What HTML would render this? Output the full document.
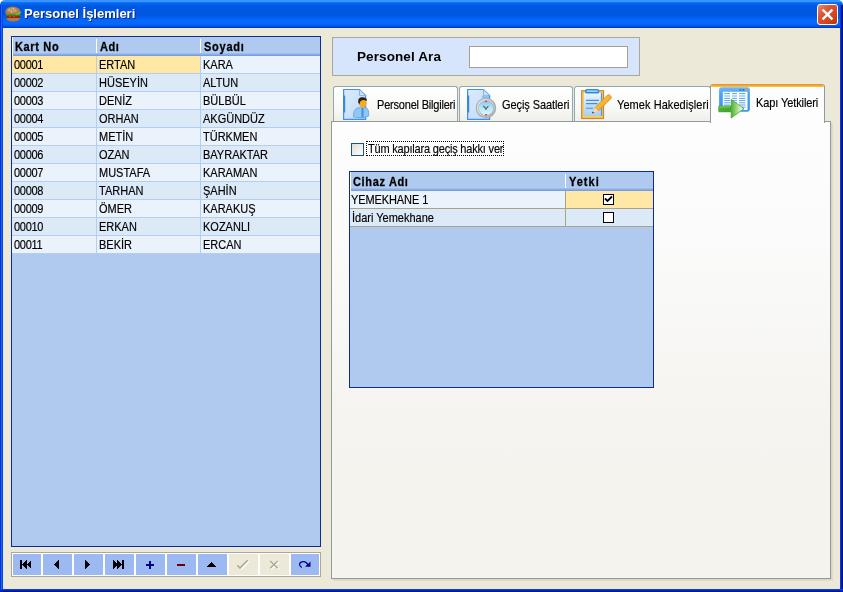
<!DOCTYPE html>
<html lang="tr">
<head>
<meta charset="utf-8">
<title>Personel İşlemleri</title>
<style>
html,body{margin:0;padding:0;}
body{width:843px;height:592px;overflow:hidden;background:#ECE9D8;font-family:"Liberation Sans",sans-serif;font-size:11px;color:#000;position:relative;}
div,span,svg{position:absolute;box-sizing:border-box;}
#win{left:0;top:0;width:843px;height:592px;background:#ECE9D8;overflow:hidden;}
#title{left:0;top:0;width:843px;height:28px;
 background:linear-gradient(to bottom,#3A93FF 0px,#3A93FF 1.5px,#0A74F8 2.5px,#0262EE 4px,#0058E2 6px,#0056E0 15px,#0260F0 18px,#0468FD 20px,#0468FD 24px,#0256E8 26px,#003CCC 27.5px,#003CCC 28px);
 border-radius:5px 5px 0 0;}
#corn{left:0;top:0;width:843px;height:10px;background:#fff;}
#ttxt{left:24px;top:6px;letter-spacing:0;color:#fff;font-size:13px;line-height:15px;font-weight:bold;white-space:nowrap;text-shadow:1px 1px 0 #0A2A7A;}
#bl{left:0;top:5px;width:3px;height:587px;background:linear-gradient(to right,#0030DC 0px,#0030DC 1px,#166AEE 1px,#166AEE 2px,#0046E0 2px,#0046E0 3px);}
#br{left:840px;top:5px;width:3px;height:587px;background:linear-gradient(to right,#0A38DC 0px,#0A38DC 1px,#001EA8 1px,#001EA8 2px,#00148C 2px,#00148C 3px);}
#bb{left:0;top:589px;width:843px;height:3px;background:linear-gradient(to bottom,#0540F0 0px,#0540F0 1px,#0025C0 1px,#0025C0 2px,#001488 2px,#001488 3px);}
#close{left:817px;top:4px;width:21px;height:21px;border:1px solid #fff;border-radius:3px;
 background:linear-gradient(135deg,#EC8B6C 0%,#DE5532 35%,#D4441E 70%,#B8300F 100%);}
.grid{border:1px solid #0A2C96;background:#B0CAEF;overflow:hidden;}
.ghead{left:0;top:0;height:19px;background:linear-gradient(to bottom,#B0CAEF 0px,#B0CAEF 14.5px,#B3CDF2 15.5px,#9DBCEA 16.5px,#8AAEE5 17.5px,#789DDC 18.5px,#789DDC 19px);}
.hc{top:1px;height:19px;letter-spacing:0.4px;font-weight:bold;font-size:11px;line-height:19px;white-space:nowrap;}
.hsep{top:2px;width:1px;height:14px;background:#fff;}
.row{left:0;height:18px;}
.row.o{background:#EAF2FC;}
.row.e{background:#DCEAF8;}
.c{top:1px;height:17px;line-height:17px;white-space:nowrap;font-size:11px;}
.t{position:relative;display:inline-block;transform:scaleY(1.13);transform-origin:0 80%;}
.c,.hc,.tl,#ttxt,#spt{will-change:transform;}
.c,.tl{-webkit-text-stroke:0.15px #000;}
.hc{-webkit-text-stroke:0.25px #000;}
.vl{top:0;width:1px;}
.hl{left:0;height:1px;}
.sel{background:#FFE8A6;top:0;height:17px;}
.tab{top:86px;height:35px;border:1px solid #91A7B4;border-bottom:none;border-radius:3px 3px 0 0;
 background:linear-gradient(to bottom,#FFFFFF 0%,#FAFAF8 50%,#F0F0EA 100%);}
.tl{white-space:nowrap;font-size:11px;line-height:13px;}
.nb{top:2px;width:29px;height:21px;background:#9DB9F1;}
.nb.d{background:#ECE9D8;}
</style>
</head>
<body>
<div id="win">
<div id="corn"></div><div id="title"><div id="ttxt">Personel İşlemleri</div></div>
<div id="bl"></div><div id="br"></div><div id="bb"></div>
<svg id="burger" style="left:4.5px;top:5.5px" width="17" height="16" viewBox="0 0 17 16">
<ellipse cx="7.8" cy="6" rx="7.5" ry="5.6" fill="#B27C46"/>
<ellipse cx="7" cy="4.3" rx="4.5" ry="2.3" fill="#C49A68"/><rect x="4" y="3" width="1" height="1" fill="#E8D0A8"/><rect x="8" y="2" width="1" height="1" fill="#E8D0A8"/><rect x="10.5" y="4.5" width="1" height="1" fill="#E8D0A8"/><rect x="6" y="5.5" width="1" height="1" fill="#E8D0A8"/>
<rect x="1" y="8" width="14.5" height="2" fill="#3E9A2A"/>
<path d="M10 8 L16 5.5 L16 7 L12 9 Z" fill="#6FC23A"/>
<rect x="1.5" y="9.6" width="13.5" height="2.4" fill="#8E2A12"/>
<rect x="4" y="10" width="2" height="1.2" fill="#E03A1A"/><rect x="8" y="10" width="2" height="1.2" fill="#E03A1A"/>
<path d="M1.5 12 H15 Q14.5 15.5 8 15.5 Q2 15.5 1.5 12 Z" fill="#B07A42"/>
</svg>
<div id="close"><svg style="left:0;top:0" width="19" height="19" viewBox="0 0 19 19"><path d="M4.6 4.6 L14.4 14.4 M14.4 4.6 L4.6 14.4" stroke="#fff" stroke-width="2.3" fill="none"/></svg></div>
<div class="grid" id="g1" style="left:11px;top:36px;width:310px;height:511px;">
<div class="ghead" style="width:308px;"></div>
<div class="hsep" style="left:0;top:0;height:19px"></div>
<div class="hc" style="left:3px;letter-spacing:0.65px"><span class="t">Kart No</span></div>
<div class="hc" style="left:88px;letter-spacing:0.6px"><span class="t">Adı</span></div>
<div class="hc" style="left:192px;letter-spacing:0.75px"><span class="t">Soyadı</span></div>
<div class="hsep" style="left:84px"></div><div class="hsep" style="left:188px"></div>
<div class="row o" style="top:19px;width:308px;">
<div class="sel" style="left:0;width:188px;"></div>
<div class="c" style="left:2px;letter-spacing:-0.3px"><span class="t">00001</span></div><div class="c" style="left:87px"><span class="t">ERTAN</span></div><div class="c" style="left:191px"><span class="t">KARA</span></div>
<div class="hl" style="top:17px;width:308px;background:#B4CDF3"></div>
</div>
<div class="row e" style="top:37px;width:308px;">
<div class="c" style="left:2px;letter-spacing:-0.3px"><span class="t">00002</span></div><div class="c" style="left:87px"><span class="t">HÜSEYİN</span></div><div class="c" style="left:191px"><span class="t">ALTUN</span></div>
<div class="hl" style="top:17px;width:308px;background:#B4CDF3"></div>
</div>
<div class="row o" style="top:55px;width:308px;">
<div class="c" style="left:2px;letter-spacing:-0.3px"><span class="t">00003</span></div><div class="c" style="left:87px"><span class="t">DENİZ</span></div><div class="c" style="left:191px"><span class="t">BÜLBÜL</span></div>
<div class="hl" style="top:17px;width:308px;background:#B4CDF3"></div>
</div>
<div class="row e" style="top:73px;width:308px;">
<div class="c" style="left:2px;letter-spacing:-0.3px"><span class="t">00004</span></div><div class="c" style="left:87px"><span class="t">ORHAN</span></div><div class="c" style="left:191px"><span class="t">AKGÜNDÜZ</span></div>
<div class="hl" style="top:17px;width:308px;background:#B4CDF3"></div>
</div>
<div class="row o" style="top:91px;width:308px;">
<div class="c" style="left:2px;letter-spacing:-0.3px"><span class="t">00005</span></div><div class="c" style="left:87px"><span class="t">METİN</span></div><div class="c" style="left:191px"><span class="t">TÜRKMEN</span></div>
<div class="hl" style="top:17px;width:308px;background:#B4CDF3"></div>
</div>
<div class="row e" style="top:109px;width:308px;">
<div class="c" style="left:2px;letter-spacing:-0.3px"><span class="t">00006</span></div><div class="c" style="left:87px"><span class="t">OZAN</span></div><div class="c" style="left:191px"><span class="t">BAYRAKTAR</span></div>
<div class="hl" style="top:17px;width:308px;background:#B4CDF3"></div>
</div>
<div class="row o" style="top:127px;width:308px;">
<div class="c" style="left:2px;letter-spacing:-0.3px"><span class="t">00007</span></div><div class="c" style="left:87px"><span class="t">MUSTAFA</span></div><div class="c" style="left:191px"><span class="t">KARAMAN</span></div>
<div class="hl" style="top:17px;width:308px;background:#B4CDF3"></div>
</div>
<div class="row e" style="top:145px;width:308px;">
<div class="c" style="left:2px;letter-spacing:-0.3px"><span class="t">00008</span></div><div class="c" style="left:87px"><span class="t">TARHAN</span></div><div class="c" style="left:191px"><span class="t">ŞAHİN</span></div>
<div class="hl" style="top:17px;width:308px;background:#B4CDF3"></div>
</div>
<div class="row o" style="top:163px;width:308px;">
<div class="c" style="left:2px;letter-spacing:-0.3px"><span class="t">00009</span></div><div class="c" style="left:87px"><span class="t">ÖMER</span></div><div class="c" style="left:191px"><span class="t">KARAKUŞ</span></div>
<div class="hl" style="top:17px;width:308px;background:#B4CDF3"></div>
</div>
<div class="row e" style="top:181px;width:308px;">
<div class="c" style="left:2px;letter-spacing:-0.3px"><span class="t">00010</span></div><div class="c" style="left:87px"><span class="t">ERKAN</span></div><div class="c" style="left:191px"><span class="t">KOZANLI</span></div>
<div class="hl" style="top:17px;width:308px;background:#B4CDF3"></div>
</div>
<div class="row o" style="top:199px;width:308px;">
<div class="c" style="left:2px;letter-spacing:-0.3px"><span class="t">00011</span></div><div class="c" style="left:87px"><span class="t">BEKİR</span></div><div class="c" style="left:191px"><span class="t">ERCAN</span></div>
<div class="hl" style="top:17px;width:308px;background:#B4CDF3"></div>
</div>
<div class="vl" style="left:84px;top:19px;height:198px;background:#B4CDF3"></div><div class="vl" style="left:188px;top:19px;height:198px;background:#B4CDF3"></div>
</div>
<div id="nav" style="left:11px;top:552px;width:310px;height:25px;border:1px solid #ACA899;background:#FFFFFF;overflow:hidden;">
<div class="nb" style="left:0px;top:1px"><svg style="left:0;top:0" width="29" height="21" viewBox="0 0 29 21" shape-rendering="crispEdges"><path d="M8 6 h2 v9 h-2 z M15 6 v9 l-4.8 -4.5 z M19.3 6 v9 l-4.8 -4.5 z" fill="#000"/></svg></div>
<div class="nb" style="left:31px;top:1px"><svg style="left:0;top:0" width="29" height="21" viewBox="0 0 29 21" shape-rendering="crispEdges"><path d="M16 6 v9 l-5.2 -4.5 z" fill="#000"/></svg></div>
<div class="nb" style="left:62px;top:1px"><svg style="left:0;top:0" width="29" height="21" viewBox="0 0 29 21" shape-rendering="crispEdges"><path d="M11 6 v9 l5.2 -4.5 z" fill="#000"/></svg></div>
<div class="nb" style="left:93px;top:1px"><svg style="left:0;top:0" width="29" height="21" viewBox="0 0 29 21" shape-rendering="crispEdges"><path d="M17 6 h2 v9 h-2 z M8 6 v9 l4.8 -4.5 z M12.3 6 v9 l4.8 -4.5 z" fill="#000"/></svg></div>
<div class="nb" style="left:124px;top:1px"><svg style="left:0;top:0" width="29" height="21" viewBox="0 0 29 21" shape-rendering="crispEdges"><path d="M10 10 h8 v2 h-8 z M13 7 h2 v8 h-2 z" fill="#00008B"/></svg></div>
<div class="nb" style="left:155px;top:1px"><svg style="left:0;top:0" width="29" height="21" viewBox="0 0 29 21" shape-rendering="crispEdges"><path d="M10 10 h8 v2 h-8 z" fill="#6B0000"/></svg></div>
<div class="nb" style="left:186px;top:1px"><svg style="left:0;top:0" width="29" height="21" viewBox="0 0 29 21" shape-rendering="crispEdges"><path d="M8.7 13 h9.6 l-4.8 -5 z" fill="#000"/></svg></div>
<div class="nb d" style="left:217px;top:1px"><svg style="left:0;top:0" width="29" height="21" viewBox="0 0 29 21"><path d="M8.3 11.3 L11 14 L18.7 6.3" stroke="#fff" stroke-width="1.6" fill="none" transform="translate(1,1)"/><path d="M8.3 11.3 L11 14 L18.7 6.3" stroke="#ACA899" stroke-width="1.6" fill="none"/></svg></div>
<div class="nb d" style="left:248px;top:1px"><svg style="left:0;top:0" width="29" height="21" viewBox="0 0 29 21"><path d="M10.2 7 L17.8 14.2 M17.8 7 L10.2 14.2" stroke="#fff" stroke-width="1.4" fill="none" transform="translate(1,1)"/><path d="M10.2 7 L17.8 14.2 M17.8 7 L10.2 14.2" stroke="#ACA899" stroke-width="1.4" fill="none"/></svg></div>
<div class="nb" style="left:279px;top:1px"><svg style="left:0;top:0" width="29" height="21" viewBox="0 0 29 21"><path d="M10.8 13.6 Q8.4 12 8.6 10.2 Q9 7.6 12.5 7.6 Q15.6 7.6 17 11" stroke="#00008B" stroke-width="1.25" fill="none"/><path d="M14 12.7 H19.5 V7.6 Z" fill="#00008B"/></svg></div>
<div style="left:0;top:0;width:308px;height:23px;border:1px solid #fff;"></div>
</div>
<div id="sp" style="left:332px;top:37px;width:308px;height:39px;border:1px solid #ACA899;background:#D6E4FC;">
<div id="spt" style="left:24px;top:11px;letter-spacing:0.1px;font-weight:bold;font-size:13.5px;line-height:16px;white-space:nowrap;">Personel Ara</div>
<div style="left:136px;top:8px;width:159px;height:22px;border:1px solid #A5A08F;background:#fff;"></div>
</div>
<div id="pg" style="left:331px;top:121px;width:500px;height:458px;border:1px solid #919B9C;background:linear-gradient(to bottom,#FDFDFE 0%,#FBFBFB 25%,#F5F4F0 65%,#F4F3EE 80%,#F4F3EE 100%);"></div>
<div style="left:831px;top:123px;width:2px;height:458px;background:linear-gradient(to right,#D6D2C2,#E4E0D0)"></div>
<div style="left:333px;top:579px;width:500px;height:2px;background:linear-gradient(to bottom,#D6D2C2,#E4E0D0)"></div>
<div class="tab" style="left:333px;width:125px;"></div>
<div class="tl" style="left:377px;top:99px;letter-spacing:-0.2px"><span class="t">Personel Bilgileri</span></div>
<div class="tab" style="left:459px;width:114px;"></div>
<div class="tl" style="left:502px;top:99px;letter-spacing:-0.08px"><span class="t">Geçiş Saatleri</span></div>
<div class="tab" style="left:574px;width:137px;"></div>
<div class="tl" style="left:617px;top:99px;letter-spacing:0.06px"><span class="t">Yemek Hakedişleri</span></div>
<div style="left:710px;top:84px;width:115px;height:39px;border:1px solid #919B9C;border-bottom:none;border-top:none;border-radius:3px 3px 0 0;background:#FDFDFD;overflow:hidden;"><div style="left:-1px;top:0;width:115px;height:3px;background:linear-gradient(to bottom,#E68B2C,#FFC73C);"></div></div>
<div class="tl" style="left:756px;top:97px;letter-spacing:-0.1px"><span class="t">Kapı Yetkileri</span></div>
<svg id="ic1" style="left:341px;top:88px" width="32" height="34" viewBox="0 0 32 34">
<defs><linearGradient id="pgl" x1="0" y1="0" x2="1" y2="1"><stop offset="0" stop-color="#DDEBFC"/><stop offset="1" stop-color="#BDD9F8"/></linearGradient></defs>
<path d="M2.6 1.5 H18.5 L24.6 7.6 V31.4 H2.6 Z" fill="url(#pgl)" stroke="#3F92EC" stroke-width="1.2"/>
<rect x="2" y="7.5" width="2.2" height="17" fill="#3588E8"/>
<path d="M18.5 1.5 V7.6 H24.6 Z" fill="#C9E0F9" stroke="#6FAAEE" stroke-width="0.8"/>
<path d="M12.5 29 Q12 22 16.5 19.8 L25.5 19.8 Q28.5 22 27.8 28 Q21 31.5 12.5 29 Z" fill="#93C7F3" stroke="#62A4E8" stroke-width="0.8"/>
<rect x="20.5" y="20" width="2" height="9.5" fill="#3F8FE8"/>
<ellipse cx="21.8" cy="15" rx="3.8" ry="4.6" fill="#F9A91E"/>
<path d="M17.2 14.5 Q16.5 9 22 9.3 Q26.5 9.8 25.8 13 Q23 11.5 20.3 12.5 Q18.8 13.5 18.4 16.5 Z" fill="#2E1E12"/>
</svg>
<svg id="ic2" style="left:465px;top:88px" width="34" height="34" viewBox="0 0 34 34">
<defs><linearGradient id="pgl2" x1="0" y1="0" x2="1" y2="1"><stop offset="0" stop-color="#DDEBFC"/><stop offset="1" stop-color="#BDD9F8"/></linearGradient>
<linearGradient id="clk" x1="0" y1="0" x2="0" y2="1"><stop offset="0" stop-color="#8CC6F5"/><stop offset="0.5" stop-color="#B5E6FA"/><stop offset="1" stop-color="#DDF8FE"/></linearGradient>
<linearGradient id="rng" x1="0" y1="0" x2="1" y2="1"><stop offset="0" stop-color="#F4F5F6"/><stop offset="1" stop-color="#A6AAAE"/></linearGradient></defs>
<path d="M2.6 1.5 H18.5 L24.6 7.6 V31.4 H2.6 Z" fill="url(#pgl2)" stroke="#3F92EC" stroke-width="1.2"/>
<rect x="2" y="7.5" width="2.2" height="17" fill="#3588E8"/>
<path d="M18.5 1.5 V7.6 H24.6 Z" fill="#C9E0F9" stroke="#6FAAEE" stroke-width="0.8"/>
<rect x="17" y="7.6" width="7" height="2.6" fill="#8FC0F2"/>
<circle cx="21" cy="20" r="10.2" fill="#A4A8AC"/>
<circle cx="21" cy="20" r="9.2" fill="url(#rng)"/>
<circle cx="21" cy="20" r="7.7" fill="#A9B4BE"/>
<circle cx="21" cy="20" r="7.2" fill="url(#clk)"/>
<rect x="20" y="12.6" width="2.2" height="1.6" fill="#F0502A"/><rect x="20" y="26" width="2.2" height="1.6" fill="#F0502A"/>
<path d="M18.3 18 L21 20.6 L23.4 18.2 M21 20.6 V22" stroke="#59626B" stroke-width="1.2" fill="none"/>
</svg>
<svg id="ic3" style="left:580px;top:88px" width="34" height="34" viewBox="0 0 34 34">
<defs><linearGradient id="pap" x1="0" y1="0" x2="0" y2="1"><stop offset="0" stop-color="#EEF5FE"/><stop offset="1" stop-color="#A9CEF6"/></linearGradient>
<linearGradient id="pen" x1="0" y1="0" x2="1" y2="1"><stop offset="0" stop-color="#FAD070"/><stop offset="0.5" stop-color="#F5B532"/><stop offset="1" stop-color="#D98F22"/></linearGradient></defs>
<rect x="1.7" y="2.7" width="21.8" height="27.8" fill="#F8CB55" stroke="#C8863C" stroke-width="1.2"/>
<rect x="3.9" y="4.8" width="18" height="23" fill="url(#pap)"/>
<rect x="20.9" y="4.8" width="1.2" height="23" fill="#4C9AEC"/>
<rect x="5.2" y="1" width="14" height="4.6" rx="1.6" fill="#2F8BEA"/>
<rect x="6.6" y="2.3" width="11.2" height="1.8" rx="0.8" fill="#8FD3FA"/>
<path d="M6 12.4 H19 M6 15.6 H17.5 M6 20.3 H13" stroke="#3C90EA" stroke-width="1.1"/>
<path d="M6 18 H14" stroke="#BBD9F8" stroke-width="1"/>
<path d="M27.6 7 Q28.6 6 29.6 7 L31 8.4 Q32 9.4 31 10.4 L18.4 23 L15 19.6 Z" fill="url(#pen)" stroke="#D08A22" stroke-width="0.8"/>
<path d="M15 19.6 L18.4 23 L13 25 Z" fill="#F6E2B8" stroke="#E0B060" stroke-width="0.4"/>
<path d="M12 25.6 L14 24.8 L12.8 23.6 Z" fill="#101030"/>
</svg>
<svg id="ic4" style="left:718px;top:86px" width="34" height="34" viewBox="0 0 34 34">
<defs><linearGradient id="wf" x1="0" y1="0" x2="0" y2="1"><stop offset="0" stop-color="#6FB8F7"/><stop offset="0.3" stop-color="#4AA2F2"/><stop offset="1" stop-color="#3C94EE"/></linearGradient>
<linearGradient id="arw" x1="0" y1="0" x2="1" y2="0"><stop offset="0" stop-color="#4DB030"/><stop offset="0.45" stop-color="#43A52A"/><stop offset="0.62" stop-color="#7ACB58"/><stop offset="0.9" stop-color="#E8F8E0"/><stop offset="1" stop-color="#58B43A"/></linearGradient></defs>
<rect x="1.1" y="1.3" width="30.8" height="24.4" rx="2.4" fill="url(#wf)"/>
<rect x="4.8" y="5.8" width="24.7" height="18.2" fill="#FAFCFF"/>
<rect x="21.5" y="3" width="1.8" height="1.8" fill="#1E7BE0"/><rect x="24.5" y="3" width="1.8" height="1.8" fill="#1E7BE0"/><rect x="27.5" y="2.8" width="2" height="2" fill="#F39A24"/>
<path d="M6.2 7.6 H12 M14 7.6 H19 M21 7.6 H27.4 M6.2 12.4 H12 M14 12.4 H19 M21 12.4 H27.4 M6.2 14.6 H12 M14 14.6 H19 M21 14.6 H27.4 M6.2 16.8 H12 M14 16.8 H19 M21 16.8 H27.4 M6.2 19 H12 M14 19 H19 M21 19 H27.4 M21 21.2 H27.4" stroke="#5AA6F0" stroke-width="1"/>
<path d="M6.2 10 H12 M14 10 H19 M21 10 H27.4" stroke="#9CCBF6" stroke-width="1.6"/>
<path d="M0.8 20 H13.2 V13.4 L26 22.7 L13.2 32 V25.8 H0.8 Z" fill="url(#arw)" stroke="#3E9E28" stroke-width="0.7"/>
<path d="M1.2 21 H12" stroke="#8AD468" stroke-width="1"/>
</svg>
<div style="left:351px;top:143px;width:13px;height:13px;border:1px solid #1C5180;background:linear-gradient(135deg,#DCDCD7,#FFFFFF);"></div>
<div style="left:366px;top:141px;width:138px;height:15px;border:1px dotted #000;"></div>
<div class="tl" style="left:368px;top:143px;letter-spacing:-0.19px"><span class="t">Tüm kapılara geçiş hakkı ver</span></div>
<div class="grid" id="g2" style="left:349px;top:171px;width:305px;height:217px;">
<div class="ghead" style="width:303px;"></div>
<div class="hsep" style="left:0;top:0;height:19px"></div>
<div class="hc" style="left:3px;letter-spacing:0.65px"><span class="t">Cihaz Adı</span></div><div class="hc" style="left:219px;letter-spacing:1px"><span class="t">Yetki</span></div>
<div class="hsep" style="left:215px"></div>
<div class="row o" style="top:19px;width:303px;"><div class="sel" style="left:216px;width:87px;"></div><div class="c" style="left:1px;letter-spacing:-0.1px"><span class="t">YEMEKHANE 1</span></div><div style="left:253px;top:3px;width:11px;height:11px;border:1px solid #000;background:#fff;"><svg style="left:0;top:0" width="9" height="9" viewBox="0 0 9 9"><path d="M1 3.5 L3.5 6 L8 1.5" stroke="#000" stroke-width="1.8" fill="none"/></svg></div><div class="hl" style="top:17px;width:303px;background:#ACA189"></div></div>
<div class="row e" style="top:37px;width:303px;"><div class="c" style="left:2px"><span class="t">İdari Yemekhane</span></div><div style="left:253px;top:3px;width:11px;height:11px;border:1px solid #000;background:#fff;"></div><div class="hl" style="top:17px;width:303px;background:#ACA189"></div></div>
<div class="vl" style="left:215px;top:19px;height:36px;background:#ACA189"></div>
</div>
</div>
</body>
</html>
